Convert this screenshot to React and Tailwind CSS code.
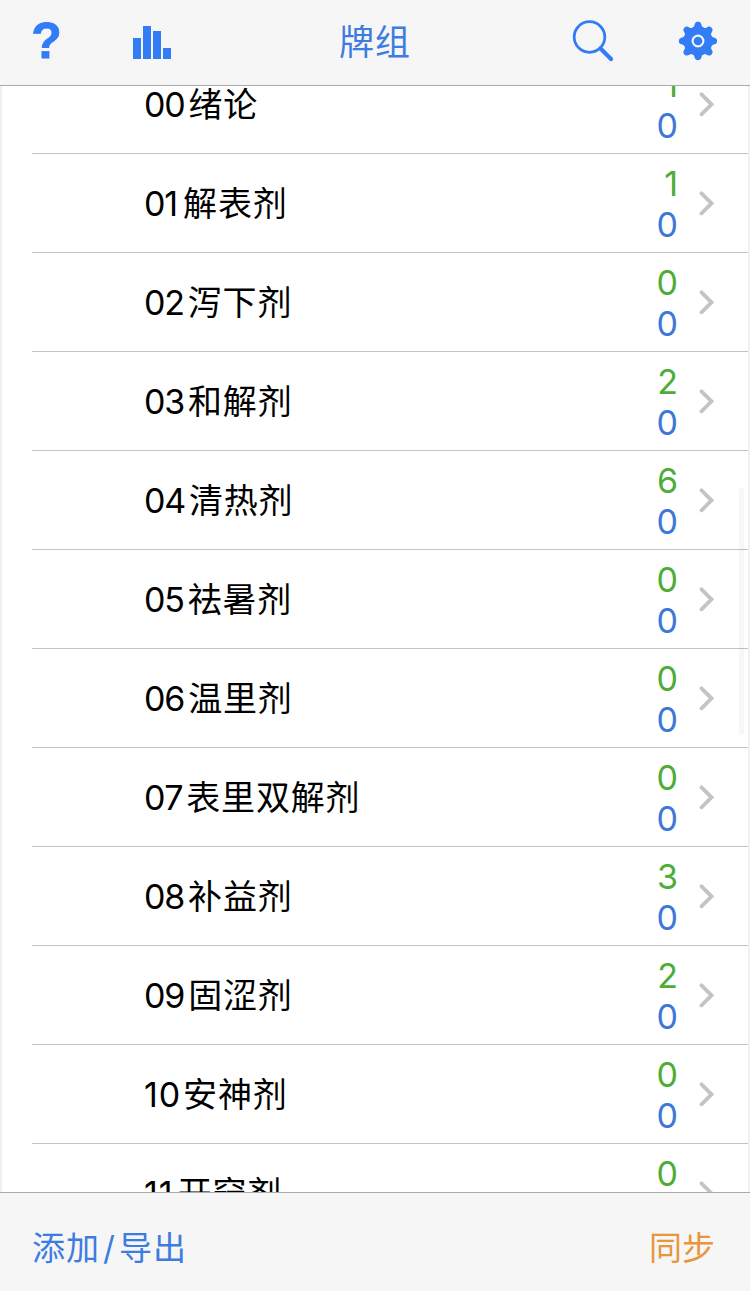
import React from "react";

const decks = [
  { id: "00", name: "绪论", due: 1, fresh: 0 },
  { id: "01", name: "解表剂", due: 1, fresh: 0 },
  { id: "02", name: "泻下剂", due: 0, fresh: 0 },
  { id: "03", name: "和解剂", due: 2, fresh: 0 },
  { id: "04", name: "清热剂", due: 6, fresh: 0 },
  { id: "05", name: "祛暑剂", due: 0, fresh: 0 },
  { id: "06", name: "温里剂", due: 0, fresh: 0 },
  { id: "07", name: "表里双解剂", due: 0, fresh: 0 },
  { id: "08", name: "补益剂", due: 3, fresh: 0 },
  { id: "09", name: "固涩剂", due: 2, fresh: 0 },
  { id: "10", name: "安神剂", due: 0, fresh: 0 },
  { id: "11", name: "开窍剂", due: 0, fresh: 0 },
];

const StatsIcon = () => (
  <svg width="38" height="33" viewBox="0 0 38 33" fill="currentColor">
    <rect x="0" y="12" width="8" height="21" />
    <rect x="10" y="0" width="8" height="33" />
    <rect x="20" y="5" width="8" height="28" />
    <rect x="30" y="22" width="8" height="11" />
  </svg>
);

const SearchIcon = () => (
  <svg width="42" height="42" viewBox="0 0 42 42" fill="none" stroke="currentColor">
    <circle cx="17.5" cy="17" r="15.3" strokeWidth="2.8" />
    <path d="M28.5 28.5L39 39" strokeWidth="4.2" strokeLinecap="round" />
  </svg>
);

const GearIcon = () => (
  <svg width="40" height="40" viewBox="-20 -20 40 40" fill="currentColor">
    <circle r="14.5" />
    {[0, 45, 90, 135, 180, 225, 270, 315].map((angle) => (
      <path
        key={angle}
        transform={`rotate(${angle})`}
        d="M-6.5 -12.5C-3.8 -13.5 -3.7 -15.5 -3.1 -17.2C-2.2 -19.8 2.2 -19.8 3.1 -17.2C3.7 -15.5 3.8 -13.5 6.5 -12.5Z"
      />
    ))}
    <circle r="5.4" fill="none" stroke="#f6f6f7" strokeWidth="2.1" />
  </svg>
);

const Chevron = () => (
  <svg width="15" height="25" viewBox="0 0 15 25" fill="none" stroke="#c4c4c6">
    <path d="M2.5 2.3L12.5 12.3L2.5 22.3" strokeWidth="3.8" strokeLinecap="round" />
  </svg>
);

const DeckRow = ({ deck }) => (
  <li className="ml-[30px] h-[99px] shrink-0 border-b border-[#c3c3c5] flex items-center pt-[1px] pl-[112px] pr-[34px]">
    <div className="flex items-center text-[34px] leading-[48px] text-black">
      {deck.id.split("").map((digit, i) => (
        <span key={i} className={digit === "1" ? "tracking-[1px]" : "tracking-[-1.2px]"}>
          {digit}
        </span>
      ))}
      <span className="ml-[4px] tracking-[0.8px]">{deck.name}</span>
    </div>
    <div className="ml-auto w-[40px] text-right text-[34px] leading-[41px]">
      <div className="text-[#4dad38]">{deck.due}</div>
      <div className="text-[#3c78d8]">{deck.fresh}</div>
    </div>
    <div className="ml-[21px]">
      <Chevron />
    </div>
  </li>
);

const App = () => {
  return (
    <div className="relative flex h-[1291px] w-[750px] flex-col overflow-hidden bg-white font-['Inter','Noto_Sans_CJK_SC',sans-serif]">
      <header className="grid h-[86px] shrink-0 grid-cols-3 items-center border-b border-[#aaaaac] bg-[#f6f6f7] pb-[3px] text-[#327cf6]">
        <div className="flex items-center pl-[32px]">
          <button className="w-[30px] font-['Liberation_Sans',sans-serif] text-[50px] leading-[60px] font-bold [-webkit-text-stroke:0.8px_#327cf6]">
            <span className="-ml-[1px]">?</span>
          </button>
          <button className="mt-[3px] ml-[71px]">
            <StatsIcon />
          </button>
        </div>
        <h1 className="pt-[2px] text-center text-[35px] leading-[48px] tracking-[1px] text-[#3d7ce0]">牌组</h1>
        <div className="flex items-center justify-end pr-[32px]">
          <button className="mr-[64px]">
            <SearchIcon />
          </button>
          <button>
            <GearIcon />
          </button>
        </div>
      </header>

      <main className="min-h-0 flex-1 overflow-hidden border-x-2 border-[#f0f0f1]">
        <ul className="-mt-[31px] flex flex-col">
          {decks.map((deck) => (
            <DeckRow key={deck.id} deck={deck} />
          ))}
        </ul>
      </main>

      {/* scroll position */}
      <div className="absolute top-[487px] left-[739px] h-[248px] w-[5px] rounded-full bg-black/3" />

      <footer className="flex h-[99px] shrink-0 items-center justify-between border-t border-[#aaaaac] bg-[#f6f6f7] pt-[12px] pr-[35px] pl-[32px] text-[33px] leading-[48px]">
        <button className="tracking-[1px] text-[#3d7ce0]">
          添加<span className="mx-[3px]">/</span>导出
        </button>
        <button className="text-[#e8963c]">同步</button>
      </footer>
    </div>
  );
};

export default App;
